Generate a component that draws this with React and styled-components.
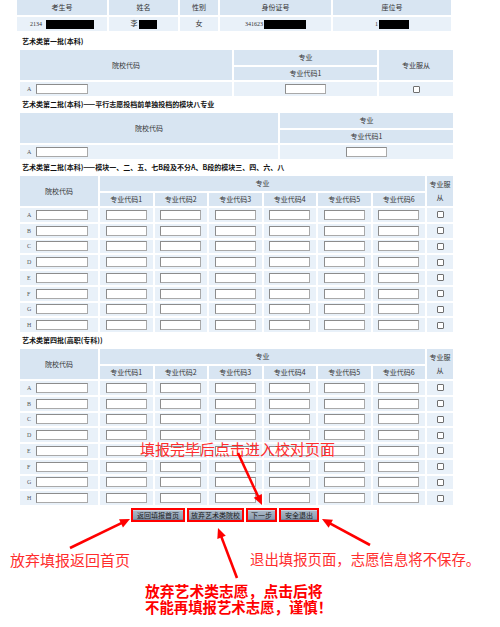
import React from 'react';
import styled, { createGlobalStyle } from 'styled-components';

const GlobalStyle = createGlobalStyle`
  html, body {
    margin: 0;
    padding: 0;
    background: #fff;
  }
  body {
    font-family: "Noto Sans CJK SC", "Noto Sans", sans-serif;
  }
`;

const Page = styled.div`
  position: relative;
  width: 500px;
  height: 627px;
  overflow: hidden;
`;

const Grid = styled.table`
  border-collapse: separate;
  border-spacing: 2px;
  table-layout: fixed;
  margin: -2px 0 -2px ${p => p.$left}px;
  width: ${p => p.$width}px;
`;

const Row = styled.tr`
  height: ${p => p.$h}px;
`;

const Head = styled.th`
  background: #d8e5f2;
  font-weight: normal;
  font-size: 7px;
  line-height: 13px;
  color: #333;
  padding: 0;
  text-align: center;
  vertical-align: middle;
`;

const Cell = styled.td`
  background: #e9f1f9;
  padding: 0;
  text-align: center;
  vertical-align: middle;
  font-size: 6px;
  line-height: 10px;
  color: #333;
`;

const Value = styled.span`
  font-family: "Liberation Serif", "Noto Sans CJK SC", serif;
  font-size: ${p => p.$size || 6}px;
  vertical-align: middle;
`;

const Redact = styled.span`
  display: inline-block;
  width: ${p => p.$w}px;
  height: 9px;
  margin-left: ${p => p.$gap || 1}px;
  background: #000;
  vertical-align: middle;
`;

const SectionTitle = styled.div`
  height: 17px;
  line-height: 17px;
  margin-top: ${p => p.$mt || 0}px;
  padding-left: 22px;
  font-size: 7px;
  font-weight: bold;
  color: #111;
  white-space: nowrap;
`;

const SchoolField = styled.div`
  display: flex;
  align-items: center;
  gap: 5px;
  padding-left: 7px;
`;

const Letter = styled.span`
  width: 4px;
  font-family: "Liberation Serif", serif;
  font-size: 6px;
  line-height: 10px;
  color: #555;
  text-align: left;
`;

const TextBox = styled.input`
  display: block;
  box-sizing: border-box;
  width: ${p => p.$w}px;
  height: 10px;
  margin: ${p => (p.$center ? '0 auto' : '0')};
  padding: 0;
  border: 1px solid #a9a9a9;
  border-top-color: #8c8c8c;
  border-left-color: #8c8c8c;
  background: #fff;
  outline: none;
`;

const CheckBox = styled.input.attrs({ type: 'checkbox' })`
  appearance: none;
  display: block;
  box-sizing: border-box;
  width: 7px;
  height: 7px;
  margin: 0 auto;
  border: 1px solid #6f6f6f;
  border-radius: 1px;
  background: #fff;
`;

const ButtonBar = styled.div`
  display: flex;
  gap: 2px;
  margin-top: 3px;
  padding-left: 131px;
`;

const Frame = styled.div`
  box-sizing: border-box;
  width: ${p => p.$w}px;
  height: 14px;
  border: 2px solid #ff0000;
  display: flex;
`;

const Button = styled.button`
  flex: 1;
  margin: 0;
  padding: 0;
  border: none;
  border-top: 1px solid #c9d4de;
  border-bottom: 1px solid #74869a;
  background: linear-gradient(#a9b8c7, #8c9db0);
  font-family: "Noto Sans CJK SC", sans-serif;
  font-size: 7px;
  line-height: 8px;
  color: #1a1a1a;
  white-space: nowrap;
`;

const Note = styled.div`
  position: absolute;
  left: ${p => p.$x}px;
  top: ${p => p.$y}px;
  font-size: ${p => p.$size}px;
  line-height: ${p => p.$size}px;
  font-weight: ${p => (p.$bold ? 'bold' : 'normal')};
  color: ${p => (p.$bold ? '#ff0000' : '#ff2d2d')};
  white-space: nowrap;
`;

const Arrows = styled.svg`
  position: absolute;
  left: 0;
  top: 0;
  pointer-events: none;
`;

const letters = ['A', 'B', 'C', 'D', 'E', 'F', 'G', 'H'];
const codes = [1, 2, 3, 4, 5, 6];

const Arrow = ({ x1, y1, x2, y2 }) => {
  const dx = x2 - x1;
  const dy = y2 - y1;
  const len = Math.hypot(dx, dy);
  const ux = dx / len;
  const uy = dy / len;
  const L = 10;
  const W = 4.5;
  const bx = x2 - ux * L;
  const by = y2 - uy * L;
  const pts = `${x2},${y2} ${bx - uy * W},${by + ux * W} ${bx + uy * W},${by - ux * W}`;
  return (
    <g>
      <line x1={x1} y1={y1} x2={bx + ux} y2={by + uy} stroke="#ff0000" strokeWidth="2.6" />
      <polygon points={pts} fill="#ff0000" />
    </g>
  );
};

const SchoolInput = ({ letter }) => (
  <SchoolField>
    <Letter>{letter}</Letter>
    <TextBox $w={52} />
  </SchoolField>
);

const SixCodeTable = () => (
  <Grid $left={18} $width={437}>
    <colgroup>
      <col width={78} />
      {codes.map(c => <col key={c} width={52.5} />)}
      <col width={26} />
    </colgroup>
    <tbody>
      <Row $h={15}>
        <Head rowSpan={2}>院校代码</Head>
        <Head colSpan={6}>专业</Head>
        <Head rowSpan={2}>专业服从</Head>
      </Row>
      <Row $h={13}>
        {codes.map(c => <Head key={c}>专业代码{c}</Head>)}
      </Row>
      {letters.map(l => (
        <Row key={l} $h={13.75}>
          <Cell><SchoolInput letter={l} /></Cell>
          {codes.map(c => (
            <Cell key={c}><TextBox $w={41} $center /></Cell>
          ))}
          <Cell><CheckBox /></Cell>
        </Row>
      ))}
    </tbody>
  </Grid>
);

export default function App() {
  return (
    <Page>
      <GlobalStyle />

      <Grid $left={15} $width={438}>
        <colgroup>
          <col width={90} />
          <col width={69} />
          <col width={38} />
          <col width={111} />
          <col width={118} />
        </colgroup>
        <tbody>
          <Row $h={15}>
            <Head>考生号</Head>
            <Head>姓名</Head>
            <Head>性别</Head>
            <Head>身份证号</Head>
            <Head>座位号</Head>
          </Row>
          <Row $h={14}>
            <Cell><Value>2134</Value><Redact $w={48} $gap={4} /></Cell>
            <Cell><Value $size={7}>李</Value><Redact $w={18} /></Cell>
            <Cell><Value $size={7}>女</Value></Cell>
            <Cell><Value>341623</Value><Redact $w={42} /></Cell>
            <Cell><Value>1</Value><Redact $w={30} /></Cell>
          </Row>
        </tbody>
      </Grid>

      <SectionTitle $mt={2}>艺术类第一批(本科)</SectionTitle>
      <Grid $left={18} $width={437}>
        <colgroup>
          <col width={212} />
          <col width={143} />
          <col width={74} />
        </colgroup>
        <tbody>
          <Row $h={15}>
            <Head rowSpan={2}>院校代码</Head>
            <Head>专业</Head>
            <Head rowSpan={2}>专业服从</Head>
          </Row>
          <Row $h={13}>
            <Head>专业代码1</Head>
          </Row>
          <Row $h={14}>
            <Cell><SchoolInput letter="A" /></Cell>
            <Cell><TextBox $w={41} $center /></Cell>
            <Cell><CheckBox /></Cell>
          </Row>
        </tbody>
      </Grid>

      <SectionTitle>艺术类第二批(本科)——平行志愿投档前单独投档的模块八专业</SectionTitle>
      <Grid $left={18} $width={437}>
        <colgroup>
          <col width={258} />
          <col width={173} />
        </colgroup>
        <tbody>
          <Row $h={15}>
            <Head rowSpan={2}>院校代码</Head>
            <Head>专业</Head>
          </Row>
          <Row $h={13}>
            <Head>专业代码1</Head>
          </Row>
          <Row $h={14}>
            <Cell><SchoolInput letter="A" /></Cell>
            <Cell><TextBox $w={41} $center /></Cell>
          </Row>
        </tbody>
      </Grid>

      <SectionTitle>艺术类第二批(本科)——模块一、二、五、七B段及不分A、B段的模块三、四、六、八</SectionTitle>
      <SixCodeTable />

      <SectionTitle>艺术类第四批(高职(专科))</SectionTitle>
      <SixCodeTable />

      <ButtonBar>
        <Frame $w={54}><Button>返回填报首页</Button></Frame>
        <Frame $w={57}><Button>放弃艺术类院校</Button></Frame>
        <Frame $w={31}><Button>下一步</Button></Frame>
        <Frame $w={40}><Button>安全退出</Button></Frame>
      </ButtonBar>

      <Note $x={140} $y={441} $size={15}>填报完毕后点击进入校对页面</Note>
      <Note $x={10} $y={552} $size={15}>放弃填报返回首页</Note>
      <Note $x={250} $y={552} $size={14.4}>退出填报页面，志愿信息将不保存。</Note>
      <Note $x={145} $y={584} $size={14.8} $bold>放弃艺术类志愿，点击后将</Note>
      <Note $x={145} $y={600} $size={14.4} $bold>不能再填报艺术志愿，谨慎！</Note>

      <Arrows width="500" height="627" viewBox="0 0 500 627">
        <Arrow x1={238} y1={453} x2={262} y2={505} />
        <Arrow x1={70} y1={548} x2={130} y2={519} />
        <Arrow x1={370} y1={545} x2={322} y2={519} />
        <Arrow x1={237} y1={578} x2={218} y2={528} />
      </Arrows>
    </Page>
  );
}
